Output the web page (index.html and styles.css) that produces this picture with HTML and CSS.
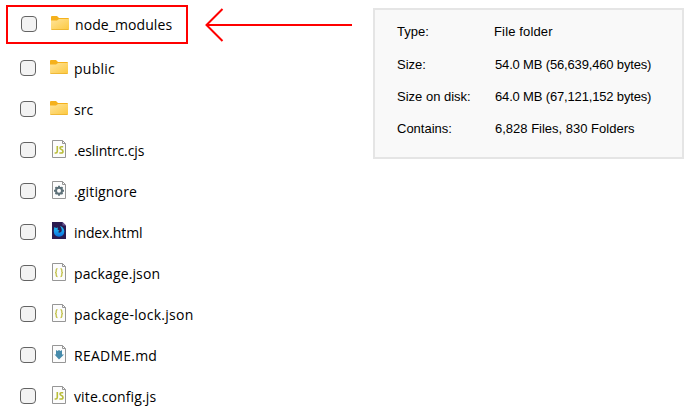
FILE: index.html
```
<!DOCTYPE html>
<html lang="en">
<head>
<meta charset="utf-8">
<title>Project folder</title>
<link rel="stylesheet" href="styles.css">
</head>
<body>
<svg class="defs" width="0" height="0" aria-hidden="true">
  <defs>
    <linearGradient id="gold" x1="0" y1="0" x2="1" y2="1"><stop offset="0" stop-color="#ffe49b"/><stop offset="1" stop-color="#fcc83e"/></linearGradient>
    <linearGradient id="fire" x1="0" y1="0" x2="0" y2="1"><stop offset="0" stop-color="#28c8f5"/><stop offset="1" stop-color="#0870df"/></linearGradient>
    <symbol id="folder" viewBox="0 0 18 14"><path d="M0 1Q0 0 1 0H6L8 2H17Q18 2 18 3V6H0Z" fill="#f5b11c"/><path d="M0 4.5H6L8 3H18V13Q18 14 17 14H1Q0 14 0 13Z" fill="url(#gold)"/><path d="M.5 13.6H17.5" stroke="#e9ad29" stroke-width=".8"/></symbol>
    <symbol id="page" viewBox="0 0 14 18"><path d="M.5.5H10.5L13.5 3.5V17.5H.5Z" fill="#fcfcfc" stroke="#969696"/><path d="M10.5.5V3.5H13.5" fill="none" stroke="#969696"/></symbol>
    <symbol id="js" viewBox="0 0 14 18"><use href="#page"/><path d="M5.3 6V11.3Q5.3 13 3.7 13H2.6M11.2 6.8H9.4Q8 6.8 8 8Q8 9 9.5 9.5Q11 10 11 11.4Q11 13 9.2 13H7.3" fill="none" stroke="#b9bd38" stroke-width="1.6"/></symbol>
    <symbol id="json" viewBox="0 0 14 18"><use href="#page"/><path d="M5.5 5.7Q4.2 5.7 4.2 7V8.6Q4.2 9.6 3 9.6Q4.2 9.6 4.2 10.6V12.2Q4.2 13.5 5.5 13.5M8.5 5.7Q9.8 5.7 9.8 7V8.6Q9.8 9.6 11 9.6Q9.8 9.6 9.8 10.6V12.2Q9.8 13.5 8.5 13.5" fill="none" stroke="#c1c04a" stroke-width="1.3"/></symbol>
    <symbol id="gear" viewBox="0 0 14 18"><use href="#page"/><circle cx="7" cy="9.7" r="3" fill="none" stroke="#5d7078" stroke-width="2"/><path d="M7 4.7V6.3M7 13.1V14.7M2 9.7H3.6M10.4 9.7H12M3.5 6.2L4.6 7.3M9.4 12.1L10.5 13.2M10.5 6.2L9.4 7.3M4.6 12.1L3.5 13.2" stroke="#5d7078" stroke-width="1.9"/></symbol>
    <symbol id="down" viewBox="0 0 14 18"><use href="#page"/><path d="M4 5L5.5 6L7 5L8.5 6L10 5V9.5H12L7 14.5L2.5 9.5H4Z" fill="#478bab"/></symbol>
    <symbol id="firefox" viewBox="0 0 14 18"><path d="M0 0H10.5L14 3.5V17H0Z" fill="#2b1a50"/><path d="M10.5 0V3.5H14Z" fill="#6a5796"/><path d="M2.5 5L4 6L6 5.5L5.5 7.5L7.5 8.8L6 10Q8 11.5 9.5 9.5Q10.5 7 8 4Q12 5 12.3 9.5Q12 14.5 7 14.7Q2 14.3 1.8 9.5Q1.7 7 2.5 5Z" fill="url(#fire)"/></symbol>
  </defs>
</svg>
<main class="screen">
  <ul class="files">
    <li class="file selected"><i class="check"></i><svg class="icon folder"><use href="#folder"/></svg><span class="name modules">node_modules</span></li>
    <li class="file"><i class="check"></i><svg class="icon folder"><use href="#folder"/></svg><span class="name public">public</span></li>
    <li class="file"><i class="check"></i><svg class="icon folder"><use href="#folder"/></svg><span class="name src">src</span></li>
    <li class="file"><i class="check"></i><svg class="icon"><use href="#js"/></svg><span class="name eslint">.eslintrc.cjs</span></li>
    <li class="file"><i class="check"></i><svg class="icon"><use href="#gear"/></svg><span class="name git">.gitignore</span></li>
    <li class="file"><i class="check"></i><svg class="icon"><use href="#firefox"/></svg><span class="name index">index.html</span></li>
    <li class="file"><i class="check"></i><svg class="icon"><use href="#json"/></svg><span class="name package">package.json</span></li>
    <li class="file"><i class="check"></i><svg class="icon"><use href="#json"/></svg><span class="name lock">package-lock.json</span></li>
    <li class="file"><i class="check"></i><svg class="icon"><use href="#down"/></svg><span class="name readme">README.md</span></li>
    <li class="file"><i class="check"></i><svg class="icon"><use href="#js"/></svg><span class="name vite">vite.config.js</span></li>
  </ul>
  <svg class="arrow" viewBox="0 0 148 34"><path d="M1 17H147M17.5 1L1.5 17L17.5 33" fill="none" stroke="#f00" stroke-width="2"/></svg>
  <dl class="details">
    <dt>Type:</dt><dd class="type">File folder</dd>
    <dt>Size:</dt><dd class="bytes">54.0 MB (56,639,460 bytes)</dd>
    <dt>Size on disk:</dt><dd class="bytes">64.0 MB (67,121,152 bytes)</dd>
    <dt>Contains:</dt><dd>6,828 Files, 830 Folders</dd>
  </dl>
</main>
</body>
</html>
```
FILE: styles.css
```
* { box-sizing: border-box; }
body { margin: 0; background: #fff; color: #000; overflow: hidden; }
.defs { display: block; }
.screen { display: flex; align-items: flex-start; width: 699px; height: 412px; overflow: hidden; }
.files { list-style: none; margin: 0; padding: 5px 0 0 6px; width: 205px; flex: none; }
.file { display: flex; align-items: flex-start; height: 41px; padding: 12px 0 0 14px; }
.file.selected { width: 182px; height: 39px; margin-bottom: 4px; padding: 9px 0 0 13px; border: 2px solid #f00; }
.check { width: 16px; height: 16px; flex: none; border: 1px solid #636363; border-radius: 4px; background: #f3f3f3; }
.icon { width: 14px; height: 18px; flex: none; margin: -2px 8px 0 16px; }
.icon.folder { width: 18px; height: 14px; margin: 0 6px 0 14px; }
.name { font: 14px/20px "Open Sans", "Noto Sans", sans-serif; margin-top: -1px; white-space: nowrap; }
.modules { letter-spacing: 0.08px; }
.public { letter-spacing: 0.25px; }
.eslint { letter-spacing: -0.13px; }
.git { letter-spacing: 0.15px; }
.index { letter-spacing: -0.12px; }
.package { letter-spacing: 0.14px; }
.lock { letter-spacing: 0.26px; }
.readme { letter-spacing: 0.24px; }
.vite { letter-spacing: 0.12px; }
.arrow { width: 148px; height: 34px; margin: 8px 0 0; flex: none; }
.details { width: 311px; height: 151px; margin: 8px 0 0 20px; padding: 14px 0 0 22px; border: 2px solid #e5e5e5; background: #f9f9f9; display: grid; grid-template-columns: 98px 1fr; grid-template-rows: 33px 32px 32px 32px; align-content: start; font: 13px/16px "Liberation Sans", Arial, sans-serif; white-space: nowrap; }
.details dt, .details dd { margin: 0; }
.details .type { margin-left: -1px; letter-spacing: 0.15px; }
.details .bytes { letter-spacing: -0.16px; }
```
